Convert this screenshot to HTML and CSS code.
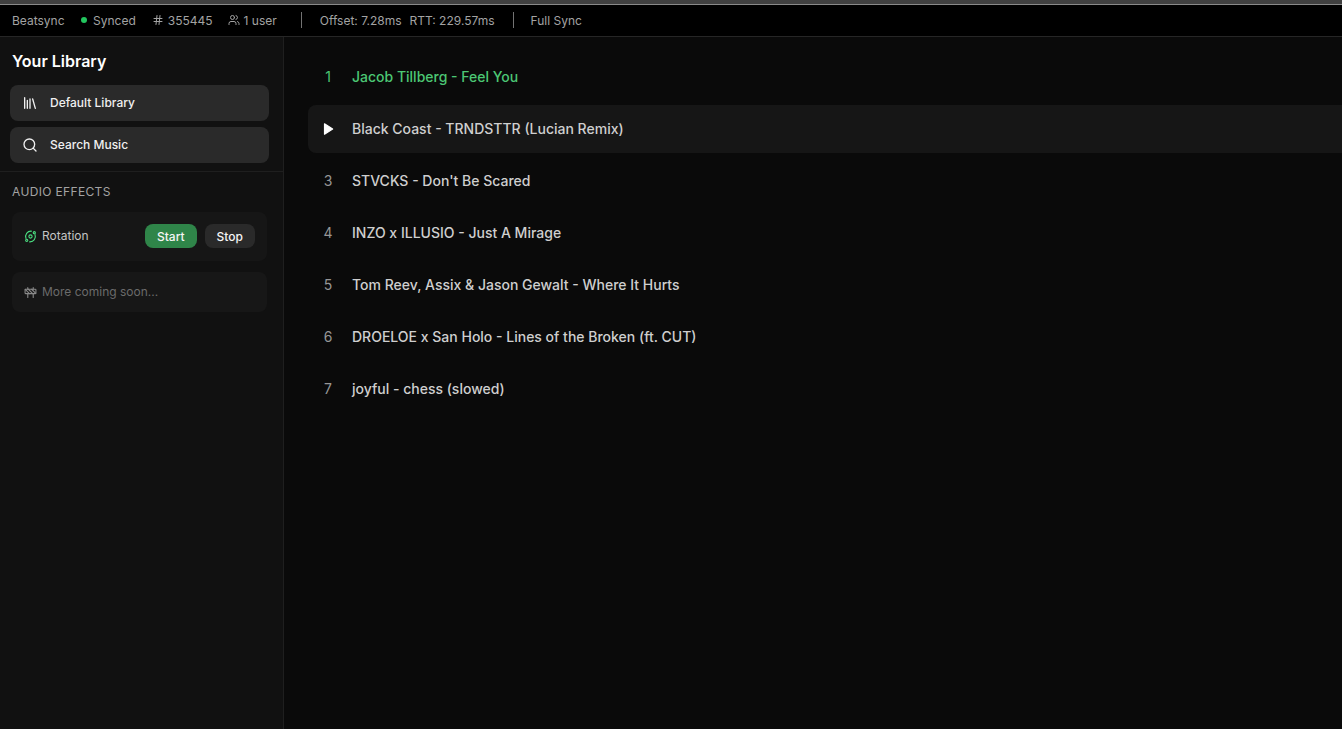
FILE: index.html
```html
<!DOCTYPE html>
<html lang="en">
  <head>
    <meta charset="UTF-8" />
    <title>Beatsync</title>
    <link rel="stylesheet" href="styles.css">
  </head>
  <body>
    <div class="browser-edge"></div>
    <header class="topbar">
      <span class="brand">Beatsync</span>
      <span class="stat synced"><i class="dot"></i>Synced</span>
      <span class="stat room">
        <svg class="icon-12" viewBox="0 0 24 24"><path d="M4 9h16M4 15h16M10 3 8 21M16 3l-2 18"/></svg>355445
      </span>
      <span class="stat users">
        <svg class="icon-12" viewBox="0 0 24 24"><path d="M16 21v-2a4 4 0 0 0-4-4H6a4 4 0 0 0-4 4v2"/><circle cx="9" cy="7" r="4"/><path d="M22 21v-2a4 4 0 0 0-3-3.87M16 3.13a4 4 0 0 1 0 7.75"/></svg>1 user
      </span>
      <span class="divider first"></span>
      <span class="stat offset">Offset: 7.28ms</span>
      <span class="stat rtt">RTT: 229.57ms</span>
      <span class="divider last"></span>
      <span class="stat">Full Sync</span>
    </header>

    <div class="app">
      <aside class="sidebar">
        <h2>Your Library</h2>
        <div class="nav">
          <button class="nav-btn">
            <svg class="icon-16" viewBox="0 0 24 24"><path d="m16 6 4 14M12 6v14M8 8v12M4 4v16"/></svg>
            <span>Default Library</span>
          </button>
          <button class="nav-btn">
            <svg class="icon-16" viewBox="0 0 24 24"><circle cx="11" cy="11" r="8"/><path d="m21 21-4.3-4.3"/></svg>
            <span>Search Music</span>
          </button>
        </div>
        <section class="effects">
          <h3>Audio Effects</h3>
          <div class="card">
            <span class="effect-name">
              <svg class="icon-13 green" viewBox="0 0 24 24"><circle cx="12" cy="12" r="3"/><circle cx="19" cy="5" r="2"/><circle cx="5" cy="19" r="2"/><path d="M10.4 21.9a10 10 0 0 0 9.9-13.7M13.6 2.1a10 10 0 0 0-9.9 13.7"/></svg>
              <span>Rotation</span>
            </span>
            <span class="effect-actions">
              <button class="pill start">Start</button>
              <button class="pill stop">Stop</button>
            </span>
          </div>
          <div class="card soon">
            <svg class="icon-13" viewBox="0 0 24 24"><rect x="2" y="6" width="20" height="8" rx="1"/><path d="M17 14v7M7 14v7M17 3v3M7 3v3M10 14 2.3 6.3M14 6l7.7 7.7M8 6l8 8"/></svg>
            <span>More coming soon...</span>
          </div>
        </section>
      </aside>

      <main class="tracks">
        <div class="track current"><span class="num">1</span><span class="title">Jacob Tillberg - Feel You</span></div>
        <div class="track hover">
          <span class="num"><svg class="play" viewBox="0 0 24 24"><path d="M6 3v18l14-9z"/></svg></span>
          <span class="title">Black Coast - TRNDSTTR (Lucian Remix)</span>
        </div>
        <div class="track"><span class="num">3</span><span class="title">STVCKS - Don't Be Scared</span></div>
        <div class="track"><span class="num">4</span><span class="title">INZO x ILLUSIO - Just A Mirage</span></div>
        <div class="track"><span class="num">5</span><span class="title">Tom Reev, Assix &amp; Jason Gewalt - Where It Hurts</span></div>
        <div class="track"><span class="num">6</span><span class="title">DROELOE x San Holo - Lines of the Broken (ft. CUT)</span></div>
        <div class="track"><span class="num">7</span><span class="title">joyful - chess (slowed)</span></div>
      </main>
    </div>
  </body>
</html>
```

FILE: styles.css
```css
* {
  box-sizing: border-box;
}
html,
body {
  height: 100%;
}
body {
  margin: 0;
  display: flex;
  flex-direction: column;
  overflow: hidden;
  font-family: Inter, "Liberation Sans", sans-serif;
  background: #0a0a0a;
  color: #e5e5e5;
}
svg {
  fill: none;
  stroke: currentColor;
  stroke-width: 2;
  stroke-linecap: round;
  stroke-linejoin: round;
  flex-shrink: 0;
}
.browser-edge {
  height: 5px;
  background: #404040;
  border-bottom: 1px solid #8a8a8a;
}
.topbar {
  height: 32px;
  flex-shrink: 0;
  display: flex;
  align-items: center;
  padding: 0 12px 1px;
  background: #000;
  border-bottom: 1px solid #262626;
  font-size: 12px;
  color: #a3a3a3;
}
.stat {
  display: flex;
  align-items: center;
}
.synced {
  margin-left: 16px;
}
.dot {
  width: 6px;
  height: 6px;
  border-radius: 50%;
  background: #22c55e;
  margin-right: 6.5px;
}
.room {
  margin-left: 16px;
}
.room svg,
.users svg {
  margin-right: 4px;
}
.users {
  margin-left: 15px;
}
.divider {
  width: 1px;
  height: 16px;
  background: #737373;
  margin: 0 18px;
}
.divider.first {
  margin-left: 24px;
}
.divider.last {
  margin-right: 17px;
}
.rtt {
  margin-left: 8px;
}
.icon-12 {
  width: 12px;
  height: 12px;
}
.icon-13 {
  width: 13px;
  height: 13px;
}
.icon-16 {
  width: 16px;
  height: 16px;
}
.app {
  flex: 1;
  display: flex;
  min-height: 0;
}
.sidebar {
  width: 284px;
  flex-shrink: 0;
  background: #111111;
  border-right: 1px solid #1f1f1f;
}
.sidebar h2 {
  margin: 0;
  padding: 14px 12px 0;
  height: 48px;
  font-size: 16px;
  line-height: 20px;
  font-weight: 600;
  color: #fff;
}
.nav {
  display: flex;
  flex-direction: column;
  gap: 6px;
  padding: 0 14px 8px 10px;
}
.nav-btn {
  height: 36px;
  display: flex;
  align-items: center;
  gap: 12px;
  padding: 0 12px;
  border: none;
  border-radius: 8px;
  background: #2a2a2a;
  color: #f0f0f0;
  font: 500 12px Inter, "Liberation Sans", sans-serif;
}
.nav-btn span,
.effect-name span,
.soon span {
  position: relative;
  top: -1px;
}
.effects {
  border-top: 1px solid #1f1f1f;
  padding: 0 16px 0 12px;
}
.effects h3 {
  margin: 0;
  padding-top: 13px;
  height: 40px;
  font-size: 12px;
  line-height: 14px;
  font-weight: 400;
  letter-spacing: 0.35px;
  text-transform: uppercase;
  color: #a3a3a3;
}
.card {
  display: flex;
  align-items: center;
  justify-content: space-between;
  height: 49px;
  padding: 0 12px;
  border-radius: 8px;
  background: #161616;
  font-size: 12px;
  color: #c4c4c4;
}
.effect-name {
  display: flex;
  align-items: center;
  gap: 5px;
}
.green {
  color: #4ade80;
}
.effect-actions {
  display: flex;
  gap: 8px;
  margin-top: -1px;
}
.pill {
  height: 24px;
  padding: 0 12px;
  border: none;
  border-radius: 8px;
  font: 500 12px Inter, "Liberation Sans", sans-serif;
  color: #f5f5f5;
}
.start {
  background: #2f8549;
}
.stop {
  background: #2a2a2a;
}
.soon {
  height: 40px;
  margin-top: 11px;
  justify-content: flex-start;
  gap: 5px;
  color: #6b6b6b;
  background: #171717;
}
.soon svg {
  color: #8a8a8a;
}
.tracks {
  flex: 1;
  display: flex;
  flex-direction: column;
  gap: 4px;
  padding: 16px 0 0 24px;
  min-width: 0;
}
.track {
  height: 48px;
  display: flex;
  align-items: center;
  padding-bottom: 2px;
  border-radius: 8px 0 0 8px;
  font-size: 14px;
  font-weight: 500;
  color: #cfcfcf;
}
.num {
  width: 40px;
  margin-right: 4px;
  display: flex;
  justify-content: center;
  font-weight: 400;
  color: #969696;
}
.current .num,
.current .title {
  color: #4cc774;
}
.hover {
  background: #161616;
}
.play {
  width: 14px;
  height: 14px;
  margin-top: 2px;
  color: #fff;
  fill: #fff;
}
```
